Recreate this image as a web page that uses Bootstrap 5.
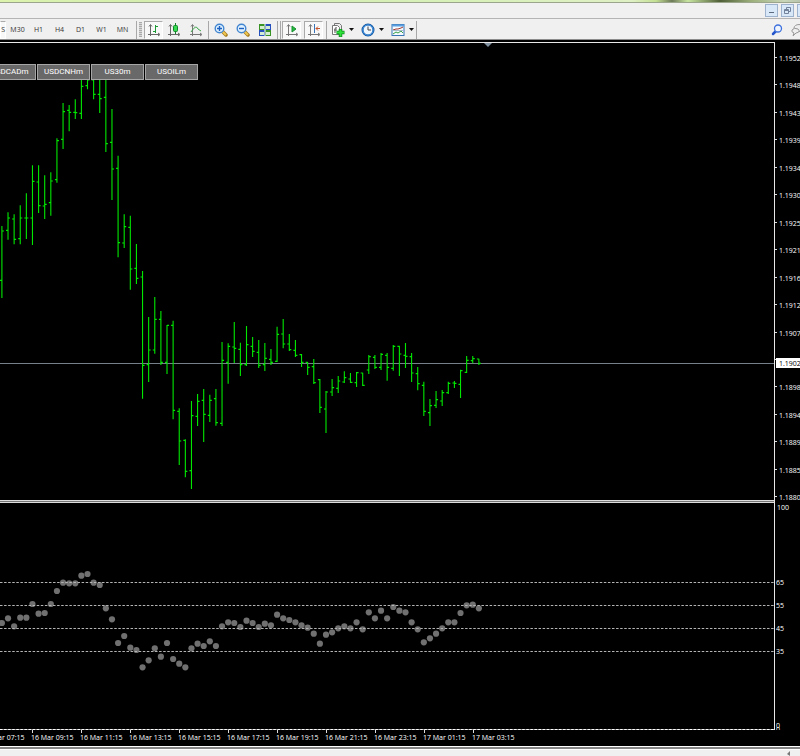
<!DOCTYPE html>
<html lang="en">
<head>
<meta charset="utf-8">
<meta name="viewport" content="width=device-width, initial-scale=1">
<title>Trading terminal</title>
<link href="https://cdn.jsdelivr.net/npm/bootstrap@5.3.0/dist/css/bootstrap.min.css" rel="stylesheet">
<style>
body{background:#f0f0f0;font:7px/12px "Open Sans","Noto Sans",sans-serif;color:#333}
button{border:0;padding:0;background:none;color:inherit;font:inherit;flex:none}
svg{display:block}
.glass{height:3px;border-bottom:1px solid #9aa58c;background:linear-gradient(90deg,#dcf3ae,#d3edb0 22%,#d8f0ba 60%,#dff0c4 79%,#c3e092 82%,#6d7a58 84%,#c8e6a0 86%,#4f5f38 90%,#9db07c 94%,#c9d6b8 98%,#b9c4ad)}
.caption-bar{height:16px;border-bottom:1px solid #b4b4b4;padding-top:1px}
.win-btn{width:13px;height:13px;background:#d9e8f8;border:1px solid #9db2cc;margin-left:3px}
.win-btn:last-child{margin-right:-10px}
.tools{height:20px;padding-top:1px}
.period{width:21px;height:18px}
.tool{width:22px;height:18px;display:flex;align-items:center;justify-content:center}
.pressed{background:#f8f8f8;border:1px solid #fff;border-top-color:#aaa;border-left-color:#aaa;width:19px}
.pressed + .pressed{margin-left:3px}
.menu-tool{width:19px}
.first-period{width:6px;height:18px;margin-right:1px;background:#f8f8f8;border:1px solid #fff;border-top-color:#aaa}
.rule{width:1px;height:18px;background:#a8a8a8;flex:none;margin:0 1px}
.rule-wide{margin:0 1px 0 3px}
.grip{width:3px;height:15px;background:repeating-linear-gradient(#aaa 0 1px,#d8d8d8 1px 2px);flex:none;margin:0 2px 0 1px}
.drop{width:8px;height:18px;display:flex;align-items:center;justify-content:center}
.menu-tool + .drop{margin-right:3px}
.menu-tool + .drop:has(+ .rule){margin-right:0}
.work{background:#000;border-top:1px solid #8c8c8c;padding-top:2px}
.plot{border-right:1px solid #e8e8e8;min-width:0;position:relative}
.price-plot{border-top:1px solid #e8e8e8;height:458px}
.splitter{height:3px;background:#777;border-top:1px solid #ddd;border-bottom:1px solid #ddd}
.osc-plot{height:227px}
.scale{width:25px;flex:none}
.scale svg,.plot svg{width:100%;height:100%}
.scale svg text{font:7px "Open Sans","Noto Sans",sans-serif;fill:#fff}
.scale svg .now{fill:#000}
.symbols{position:absolute;top:21px;left:-17px;gap:1px}
.symbol{width:53px;height:16px;background:#696969;border:1px solid #a6a6a6;color:#fff;font:8px/14px Roboto,sans-serif}
.times{height:16px;color:#fff}
.time-mark{width:49px;flex:none;white-space:nowrap;position:relative;padding-top:2px}
.time-mark::before{content:"";position:absolute;top:0;left:1px;width:1px;height:3px;background:#ddd}
.first-mark{margin-left:-18px}
.frame-end{height:4px;background:#858585;border-top:1px solid #fff;border-bottom:1px solid #fff}
</style>
<script src="https://cdn.jsdelivr.net/npm/bootstrap@5.3.0/dist/js/bootstrap.bundle.min.js"></script>
</head>
<body class="d-flex flex-column min-vh-100 overflow-hidden">
<div class="glass"></div>
<header class="caption-bar d-flex justify-content-end overflow-hidden">
  <button class="win-btn" aria-label="Minimize"><svg width="11" height="11"><path d="M3 7.500h5" stroke="#5c6b80"/></svg></button>
  <button class="win-btn" aria-label="Restore"><svg width="11" height="11" fill="none" stroke="#71829a"><path d="M4.500 4V2.500h4v4H7M2.500 4.500h4v4h-4zM2.500 5.500h4"/></svg></button>
  <button class="win-btn" aria-label="Close"><svg width="11" height="11"><path d="M3 3l5 5M8 3l-5 5" stroke="#5c6b80"/></svg></button>
</header>
<nav class="tools d-flex align-items-center overflow-hidden" aria-label="Chart tools">
  <button class="first-period d-flex justify-content-end align-items-center" aria-label="M15"><span>S</span></button>
  <button class="period">M30</button><button class="period">H1</button><button class="period">H4</button><button class="period">D1</button><button class="period">W1</button><button class="period">MN</button>
  <span class="rule rule-wide"></span><span class="grip"></span>
  <button class="tool pressed" aria-label="Bar chart"><svg width="14" height="14" fill="none" stroke="#666"><path d="M3.500 2v11M1 11.500h11M2 3.500l1.500-2L5 3.500M11 10l2 1.500-2 1.500"/><path d="M8.500 2v8M8 3.500h3M6 8.500h2" stroke="#1c9b35"/></svg></button>
  <button class="tool" aria-label="Candlesticks"><svg width="14" height="14" fill="none" stroke="#666"><path d="M3.500 2v11M1 11.500h11M2 3.500l1.500-2L5 3.500M11 10l2 1.500-2 1.500"/><path d="M8.500 0v11" stroke="#14822a"/><rect x="6.500" y="2.500" width="4" height="6" rx="1" fill="#35dc50" stroke="#14822a"/></svg></button>
  <button class="tool" aria-label="Line chart"><svg width="14" height="14" fill="none" stroke="#777"><path d="M3.500 2v11M1 11.500h11M2 3.500l1.500-2L5 3.500M11 10l2 1.500-2 1.500"/><path d="M2 9q5-8 7-3l3 2" stroke="#3da64b"/></svg></button>
  <span class="rule"></span>
  <button class="tool" aria-label="Zoom in"><svg width="14" height="14"><path d="M8.500 8.500l3.500 3.500" stroke="#a57c20" stroke-width="3.500" stroke-linecap="round"/><path d="M8 8l4 4" stroke="#f0c850" stroke-width="2"/><circle cx="5.500" cy="5.500" r="4.300" fill="#dff1ff" stroke="#4386d0" stroke-width="1.400"/><path d="M3 5.500h5M5.500 3v5" stroke="#1d62c0" stroke-width="1.400"/></svg></button>
  <button class="tool" aria-label="Zoom out"><svg width="14" height="14"><path d="M8.500 8.500l3.500 3.500" stroke="#a57c20" stroke-width="3.500" stroke-linecap="round"/><path d="M8 8l4 4" stroke="#f0c850" stroke-width="2"/><circle cx="5.500" cy="5.500" r="4.300" fill="#dff1ff" stroke="#4386d0" stroke-width="1.400"/><path d="M3 5.500h5" stroke="#1d62c0" stroke-width="1.400"/></svg></button>
  <button class="tool" aria-label="Tile windows"><svg width="14" height="14"><path d="M1 1h6v6H1zM7 7h6v6H7z" fill="#389324"/><path d="M7 1h6v6H7zM1 7h6v6H1z" fill="#2450bd"/><path d="M2 3h4v3H2zM8 3h4v3H8zM2 9h4v3H2zM8 9h4v3H8z" fill="#d4ecd4"/><path d="M7 1v12" stroke="#fff"/></svg></button>
  <span class="rule"></span><span class="rule"></span>
  <button class="tool pressed" aria-label="Auto scroll"><svg width="14" height="14" fill="none" stroke="#777"><path d="M3.500 2v11M1 11.500h11M2 3.500l1.500-2L5 3.500M11 10l2 1.500-2 1.500"/><path d="M7 3l4 3-4 3z" fill="#25b840" stroke="#179030"/></svg></button>
  <button class="tool pressed" aria-label="Chart shift"><svg width="14" height="14" fill="none" stroke="#777"><path d="M3.500 2v11M1 11.500h11M2 3.500l1.500-2L5 3.500M11 10l2 1.500-2 1.500"/><path d="M7.500 1v9" stroke="#3974b8"/><path d="M13 5.500H9M11 3.500l-2 2 2 2" stroke="#c4532c"/></svg></button>
  <span class="rule rule-wide"></span>
  <button class="tool menu-tool" aria-label="Indicators"><svg width="14" height="14"><path d="M3.500.5h5l2 2v8h-7z" fill="#eee" stroke="#777"/><path d="M1.500 2.500h5l2 2v7h-7z" fill="#fff" stroke="#777"/><path d="M6 5q-2-1-2 1v4M3 7h3" fill="none" stroke="#555"/><path d="M9.500 6v8M5.500 9.500h8" stroke="#08851a" stroke-width="3.500"/><path d="M9.500 6.500v7M6 9.500h7" stroke="#2ee03a" stroke-width="2"/></svg></button>
  <button class="drop" aria-label="Indicator list"><svg width="5" height="3"><path d="M0 0h5L2.500 3z" fill="#111"/></svg></button>
  <button class="tool menu-tool" aria-label="Periods"><svg width="14" height="14"><circle cx="7" cy="7" r="5.500" fill="#eef6ff" stroke="#19579f" stroke-width="2"/><circle cx="7" cy="7" r="5.200" fill="none" stroke="#3c94e4"/><path d="M7 3.500V7h3" fill="none" stroke="#444"/></svg></button>
  <button class="drop" aria-label="Period list"><svg width="5" height="3"><path d="M0 0h5L2.500 3z" fill="#111"/></svg></button>
  <button class="tool menu-tool" aria-label="Templates"><svg width="14" height="14" fill="none"><rect x="1" y="1.500" width="12" height="11" fill="#f4faff" stroke="#3874b4"/><path d="M1 2.500h12" stroke="#5aa0e0" stroke-width="2"/><path d="M2 7l3-1 2 0 3-1 2-1" stroke="#a33830"/><path d="M2 11l3-2 2 1 3-2 2 2" stroke="#36a048"/><path d="M2 7.500h10" stroke="#a8bccc"/></svg></button>
  <button class="drop" aria-label="Template list"><svg width="5" height="3"><path d="M0 0h5L2.500 3z" fill="#111"/></svg></button>
  <span class="rule"></span>
  <button class="tool ms-auto" aria-label="Search"><svg width="12" height="12"><path d="M5 7L2 10" stroke="#2455cc" stroke-width="2.500" stroke-linecap="round"/><circle cx="7" cy="4.500" r="3.500" fill="#eef5ff" stroke="#3d70dc" stroke-width="1.300"/></svg></button>
  <button class="drop ms-1 me-0" aria-label="Messages"><svg width="14" height="14" class="flex-shrink-0 ms-1" fill="#eee" stroke="#999"><ellipse cx="8" cy="5" rx="5" ry="3.500"/><path d="M2 13l1-3Q0 9 1 7q2-3 6-1 3 3-2 4z"/></svg></button>
</nav>
<main class="work">
  <div class="d-flex">
    <section class="plot price-plot flex-grow-1">
      <svg id="bars" role="img" aria-label="Price bars"></svg>
      <div class="symbols d-flex"><button class="symbol">USDCADm</button><button class="symbol">USDCNHm</button><button class="symbol">US30m</button><button class="symbol">USOILm</button></div>
    </section>
    <div class="scale"><svg id="prices" overflow="visible"></svg></div>
  </div>
  <div class="d-flex"><div class="plot splitter flex-grow-1"></div><div class="scale"></div></div>
  <div class="d-flex">
    <section class="plot osc-plot flex-grow-1"><svg id="dots" role="img" aria-label="Oscillator"></svg></section>
    <div class="scale"><svg id="levels"></svg></div>
  </div>
  <div class="times d-flex overflow-hidden">
    <span class="time-mark first-mark">16 Mar 07:15</span><span class="time-mark">16 Mar 09:15</span><span class="time-mark">16 Mar 11:15</span><span class="time-mark">16 Mar 13:15</span><span class="time-mark">16 Mar 15:15</span><span class="time-mark">16 Mar 17:15</span><span class="time-mark">16 Mar 19:15</span><span class="time-mark">16 Mar 21:15</span><span class="time-mark">16 Mar 23:15</span><span class="time-mark">17 Mar 01:15</span><span class="time-mark">17 Mar 03:15</span>
  </div>
</main>
<div class="frame-end"></div>
<footer class="d-flex justify-content-end pe-2"><svg width="6" height="7"><path d="M4 1L1 4l3 2z" fill="#777"/></svg></footer>
<script>
// Bars in thirds of a pixel: [high, low, open, close]; each group has its own base line.
const groups = [
 [27, [[468,684,631,483],[427,509,481,444],[433,523,447,508],[406,523,506,444],[370,507,444,444],[286,525,444,334],[286,429,336,407],[316,447,408,403],[307,437,398,333],[205,338,329,212],[99,237,208,125],[105,184,121,127],[88,147,127,128],[12,147,130,49],[0,58,47,30],[0,88,30,73],[0,129,73,86],[0,246,82,221],[117,390,217,297],[257,562,295,518],[433,534,519,470],[437,659,472,597],[522,642,595,625]]],
 [217, [[33,416,51,316],[171,366,314,270],[111,281,270,178],[153,315,178,307],[195,342,307,196],[182,478,196,451],[445,615,454,543],[538,652,541,634],[423,687,632,467],[402,498,469,424],[387,546,421,463],[404,486,466,421],[387,497,416,488],[246,498,490,301],[250,371,307,259],[186,309,261,265]]],
 [267, [[98,198,118,164],[48,168,164,104],[81,141,109,124],[90,174,127,166],[99,183,164,145],[117,165,148,157],[50,156,154,73],[27,115,72,102],[72,123,102,119],[90,141,121,136],[132,171,134,157],[156,195,157,172],[147,222,170,218],[207,309,209,292],[243,369,297,246],[207,258,246,233],[198,249,235,213],[184,219,216,203],[189,219,207,217],[186,231,218,188]]],
 [287, [[128,168,129,166],[75,132,120,80],[75,117,82,112],[69,120,112,73],[69,152,76,112],[45,122,115,49],[47,138,49,72],[39,114,76,79],[69,156,80,129],[111,181,131,161],[155,258,166,244],[207,288,248,227],[183,234,226,209],[180,228,213,188],[155,192,188,160],[153,174,159,160],[119,204,163,122],[78,129,127,91],[78,100,92,86],[86,105,87,100]]]
];
const step = 6.115, start = 1.9;
let path = "", n = 0;
for (const [base, rows] of groups) for (const row of rows) {
  const [h, l, o, c] = row.map(v => base + v / 3), x = start + step * n++;
  path += `M${x} ${h}V${l}M${x - 2} ${o}H${x}M${x} ${c}h2`;
}
document.getElementById("bars").innerHTML =
  `<path d="M0 320.500H4000" stroke="#75808a"/><path d="${path}" stroke="#00e800" stroke-width="1.100" fill="none"/><path d="M484 0h8l-4 4z" fill="#8291a1"/>`;

const prices = "1.1952 1.1948 1.1943 1.1939 1.1934 1.1930 1.1925 1.1921 1.1916 1.1912 1.1907 1.1902 1.1898 1.1894 1.1889 1.1885 1.1880".split(" ");
document.getElementById("prices").innerHTML = prices.map((p, i) => {
  const y = Math.round(16 + i * 27.45);
  return `<path d="M0 ${y - .5}h2" stroke="#ddd"/><text x="4" y="${y + 3}">${p}</text>`;
}).join("") + `<rect x="1" y="316" width="24" height="10" fill="#fff"/><text class="now" x="4" y="324">1.1902</text>`;

const values = [189,175,199,173,173,132,161,159,132,93,68,70,70,47,42,68,75,145,178,249,228,263,270,322,301,265,290,249,297,311,322,265,251,258,244,258,199,187,189,201,182,189,201,191,196,164,175,180,187,196,203,221,251,224,217,205,199,205,187,208,157,175,152,175,141,152,157,187,208,247,235,221,205,187,187,159,136,134,145];
const lines = [79.5, 102.5, 125.5, 148.5];
document.getElementById("dots").innerHTML =
  values.map((v, i) => `<circle cx="${start + step * i}" cy="${57 + v / 3}" r="3.100" fill="#707070"/>`).join("") +
  lines.map(y => `<path d="M0 ${y}H4000" stroke="#b4b4b4" stroke-dasharray="2.500 1.580"/>`).join("") +
  `<path d="M0 226.500H4000" stroke="#888"/><path d="M0 226.500H4000" stroke="#fff" stroke-dasharray="2.500 1.580"/>`;
document.getElementById("levels").innerHTML =
  [["100",7],["65",82],["55",105],["45",128],["35",151],["0",225],["0",229]]
  .map(([t, y], i) => `<text x="${i ? 1 : 2}" y="${y}">${t}</text>`).join("");
</script>
</body>
</html>
